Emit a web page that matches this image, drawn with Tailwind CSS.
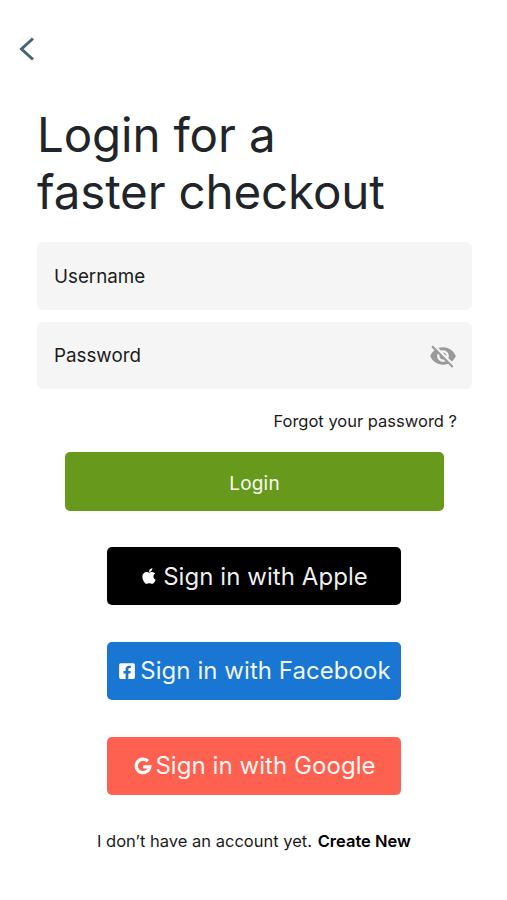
<!DOCTYPE html>
<html lang="en"><head><meta charset="utf-8"><title>Login</title><script src="https://cdn.jsdelivr.net/npm/@tailwindcss/browser@4"></script></head>
<body class="bg-white font-['Inter',sans-serif] text-[#1b1b1b]">
<main class="w-[507px] h-[900px] overflow-hidden flex flex-col">
<header class="pl-[19px] pt-[36px] h-[106px]"><svg class="w-4 h-[26px]" viewBox="0 0 16 26" fill="none" stroke="#456575" stroke-width="3"><path d="M14 2.500L2.500 13L14 23.500"/></svg></header>
<h1 class="pl-[37px] text-[47.5px] leading-[57px] font-normal tracking-[-0.14px] text-[#212529] h-[136px] whitespace-nowrap">Login for a<br>faster checkout</h1>
<form class="pl-[37px] w-[472px] flex flex-col">
<label class="h-[68px] rounded-[6px] bg-[#f5f5f5] pl-[17px] pt-[2px] flex items-center text-[18.8px]">Username</label>
<label class="mt-[12px] h-[67px] rounded-[6px] bg-[#f5f5f5] pl-[17px] pr-[15px] flex items-center justify-between text-[18.8px]"><span class="pt-[2px]">Password</span>
<svg class="w-[28px] h-[28px]" viewBox="0 0 24 24" fill="#999"><path d="M12 7c2.76 0 5 2.24 5 5 0 .65-.13 1.26-.36 1.83l2.92 2.92c1.51-1.26 2.7-2.89 3.43-4.75-1.73-4.39-6-7.5-11-7.5-1.4 0-2.74.25-3.98.7l2.16 2.16C10.74 7.13 11.35 7 12 7zM2 4.27l2.28 2.28.46.46A11.8 11.8 0 0 0 1 12c1.73 4.39 6 7.5 11 7.5 1.55 0 3.03-.3 4.38-.84l.42.42L19.73 22 21 20.73 3.27 3 2 4.27zM7.53 9.8l1.55 1.55c-.05.21-.08.43-.08.65 0 1.66 1.34 3 3 3 .22 0 .44-.03.65-.08l1.55 1.55c-.67.33-1.41.53-2.2.53-2.76 0-5-2.24-5-5 0-.79.2-1.53.53-2.2zm4.31-.78 3.15 3.15.02-.16c0-1.66-1.34-3-3-3l-.17.01z"/></svg></label>
</form>
<a class="h-[63px] pt-[20px] pr-[50px] text-right text-[16.5px] leading-6">Forgot your password ?</a>
<button class="ml-[65px] w-[379px] h-[59px] pt-[5px] rounded-[5px] bg-[#67991c] text-[#f7fbef] text-[19px] tracking-[0.2px]">Login</button>
<section class="pt-[36px] ml-[107px] w-[294px] flex flex-col gap-[37px] text-white/95 text-[24px] tracking-[0.06px]">
<button class="h-[58px] rounded-[5px] bg-black pl-[2px] flex items-center justify-center gap-[7px]"><svg class="w-[14px] h-[18px]" viewBox="0 0 384 512" fill="white"><path d="M318.7 268.7c-.2-36.7 16.4-64.4 50-84.8-18.8-26.9-47.2-41.7-84.7-44.6-35.5-2.8-74.3 20.7-88.5 20.7-15 0-49.4-19.7-76.4-19.7C63.3 141.2 4 184.8 4 273.5q0 39.3 14.4 81.2c12.8 36.7 59 126.7 107.2 125.2 25.2-.6 43-17.9 75.8-17.9 31.8 0 48.3 17.9 76.4 17.9 48.6-.7 90.4-82.5 102.6-119.3-65.2-30.7-61.7-90-61.7-91.9zm-56.6-164.2c27.3-32.4 24.8-61.9 24-72.5-24.1 1.4-52 16.4-67.9 34.9-17.5 19.8-27.8 44.3-25.6 71.9 26.1 2 49.9-11.4 69.5-34.3z"/></svg><span class="whitespace-nowrap pt-[2px]">Sign in with Apple</span></button>
<button class="h-[58px] rounded-[5px] bg-[#1976d2] pl-[2px] flex items-center justify-center gap-[5px]"><svg class="w-[16px] h-[18px]" viewBox="0 0 448 512" fill="white"><path d="M400 32H48A48 48 0 0 0 0 80v352a48 48 0 0 0 48 48h137.250V327.690h-63V256h63v-54.640c0-62.150 37-96.480 93.670-96.480 27.140 0 55.520 4.840 55.520 4.840v61h-31.270c-30.810 0-40.420 19.120-40.420 38.730V256h68.780l-11 71.690h-57.780V480H400a48 48 0 0 0 48-48V80a48 48 0 0 0-48-48z"/></svg><span class="whitespace-nowrap">Sign in with Facebook</span></button>
<button class="h-[58px] rounded-[5px] bg-[#ff6150] pl-[2px] flex items-center justify-center gap-[3px]"><svg class="w-[18px] h-[18px]" viewBox="0 0 18 18" fill="none" stroke="white" stroke-width="3.2"><path d="M14 4.200A6.800 6.800 0 1 0 15.800 9.800H9.200"/></svg><span class="whitespace-nowrap">Sign in with Google</span></button>
</section>
<p class="pl-[97px] pt-[34px] text-[16.5px] leading-6 whitespace-nowrap">I don’t have an account yet. <b class="ml-[1px] font-semibold text-black">Create New</b></p>
</main></body></html>
